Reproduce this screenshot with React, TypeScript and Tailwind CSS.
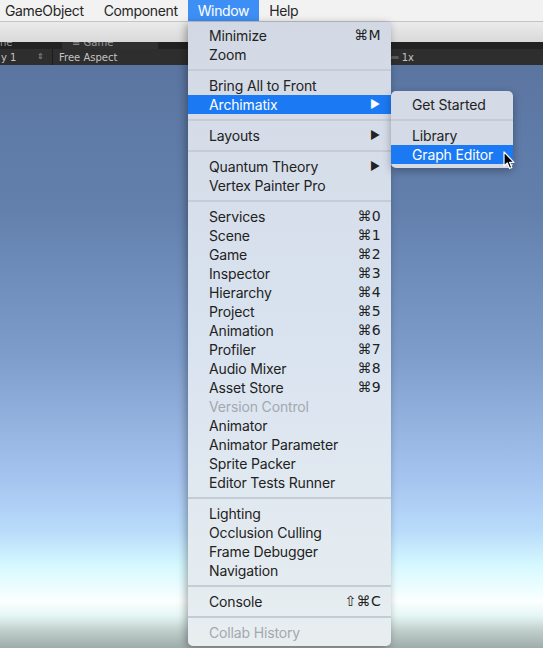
import { Fragment } from 'react';

type Item =
  | { sep: true }
  | { label: string; shortcut?: string; submenu?: boolean; disabled?: boolean; active?: boolean };

const windowMenu: Item[] = [
  { label: 'Minimize', shortcut: '⌘M' },
  { label: 'Zoom' },
  { sep: true },
  { label: 'Bring All to Front' },
  { label: 'Archimatix', submenu: true, active: true },
  { sep: true },
  { label: 'Layouts', submenu: true },
  { sep: true },
  { label: 'Quantum Theory', submenu: true },
  { label: 'Vertex Painter Pro' },
  { sep: true },
  { label: 'Services', shortcut: '⌘0' },
  { label: 'Scene', shortcut: '⌘1' },
  { label: 'Game', shortcut: '⌘2' },
  { label: 'Inspector', shortcut: '⌘3' },
  { label: 'Hierarchy', shortcut: '⌘4' },
  { label: 'Project', shortcut: '⌘5' },
  { label: 'Animation', shortcut: '⌘6' },
  { label: 'Profiler', shortcut: '⌘7' },
  { label: 'Audio Mixer', shortcut: '⌘8' },
  { label: 'Asset Store', shortcut: '⌘9' },
  { label: 'Version Control', disabled: true },
  { label: 'Animator' },
  { label: 'Animator Parameter' },
  { label: 'Sprite Packer' },
  { label: 'Editor Tests Runner' },
  { sep: true },
  { label: 'Lighting' },
  { label: 'Occlusion Culling' },
  { label: 'Frame Debugger' },
  { label: 'Navigation' },
  { sep: true },
  { label: 'Console', shortcut: '⇧⌘C' },
  { sep: true },
  { label: 'Collab History', disabled: true },
];

const archimatixMenu: Item[] = [
  { label: 'Get Started' },
  { sep: true },
  { label: 'Library' },
  { label: 'Graph Editor', active: true },
];

function MenuRows({ items }: { items: Item[] }) {
  return (
    <>
      {items.map((item, i) => {
        if ('sep' in item) {
          return <div key={i} className="my-[5px] h-[2px] bg-[#c6ccd5]" />;
        }
        const color = item.active ? 'bg-[#1b7af3] text-white' : item.disabled ? 'text-[#a3a8b0]' : 'text-[#222222]';
        return (
          <div key={i} className={`flex h-[19px] items-center pl-[21px] pr-[10px] ${color}`}>
            <span className="flex-1 whitespace-nowrap tracking-[-0.15px]">{item.label}</span>
            {item.shortcut && (
              <span className="whitespace-nowrap font-['DejaVu_Sans',sans-serif] text-[14px] tracking-[0.3px]">
                {item.shortcut}
              </span>
            )}
            {item.submenu && <span className="pr-[1px] text-[11px]">▶</span>}
          </div>
        );
      })}
    </>
  );
}

function Cursor() {
  return (
    <svg className="absolute left-[503px] top-[151px]" width="12" height="19" viewBox="0 0 12 19">
      <path
        d="M1 1 L1 15 L4.3 12 L6.6 17.4 L8.8 16.5 L6.6 11.3 L11 11.3 Z"
        fill="#000"
        stroke="#fff"
        strokeWidth="1.2"
        strokeLinejoin="round"
      />
    </svg>
  );
}

export default function App() {
  return (
    <div className="relative flex h-[648px] w-[543px] flex-col overflow-hidden font-['Inter',sans-serif] text-[14px]">
      {/* macOS menu bar */}
      <div className="flex h-[22px] shrink-0 items-center border-b border-[#c4c4c4] bg-[#f2f2f2] tracking-[-0.35px] text-[#262626]">
        <span className="pl-[5px] pr-[10px]">GameObject</span>
        <span className="px-[10px]">Component</span>
        <span className="flex h-full items-center bg-[#3d8ff6] px-[10px] text-white">Window</span>
        <span className="px-[10px]">Help</span>
      </div>

      {/* editor chrome */}
      <div className="h-[20px] shrink-0 bg-gradient-to-b from-[#ebebeb] to-[#d9d9d9]" />
      <div className="flex h-[7px] shrink-0 items-end overflow-hidden bg-[#222222] font-['DejaVu_Sans',sans-serif] text-[10px] leading-[12px] text-[#9a9a9a]">
        <div className="h-[7px] w-[62px] overflow-hidden leading-[2px]">ne</div>
        <div className="h-[7px] w-[96px] overflow-hidden bg-[#303030] pl-[10px] leading-[2px]">≡ Game</div>
      </div>
      <div className="flex h-[16px] shrink-0 items-center bg-[#2e2e2e] font-['DejaVu_Sans',sans-serif] text-[10px] text-[#c4c4c4]">
        <span className="w-[37px] pl-[1px]">y 1</span>
        <span className="w-[15px] text-[8px] text-[#9a9a9a]">⇕</span>
        <span className="h-full w-px bg-[#1c1c1c]" />
        <span className="pl-[6px]">Free Aspect</span>
        <span className="ml-auto mr-[129px] flex items-center gap-[3px]">
          <span className="h-[3px] w-[8px] rounded-sm bg-[#5a5a5a]" />
          <span>1x</span>
        </span>
      </div>

      {/* scene sky */}
      <div className="flex-1 bg-[linear-gradient(to_bottom,#5a75a0_0%,#6380ad_25%,#7e9dcb_50%,#a5c4ef_71%,#b9dcfb_80%,#d6f9ff_86%,#fbffff_92%,#e4f6f4_94.5%,#c0cfcc_97%,#9fadaa_100%)]" />

      {/* Window dropdown */}
      <div className="absolute left-[188px] top-[22px] w-[203px] rounded-b-[5px] bg-gradient-to-b from-[#d3d9e4] via-[#d9e3f0] to-[#e8eef0] py-[4px] shadow-[-2px_2px_8px_rgba(0,0,0,0.35)]">
        <MenuRows items={windowMenu} />
      </div>

      {/* Archimatix submenu */}
      <div className="absolute left-[391px] top-[91px] w-[122px] rounded-[5px] bg-[#d4dbe6] py-[4px] shadow-[0_3px_8px_rgba(0,0,0,0.3)]">
        <MenuRows items={archimatixMenu} />
      </div>

      <Cursor />
    </div>
  );
}
